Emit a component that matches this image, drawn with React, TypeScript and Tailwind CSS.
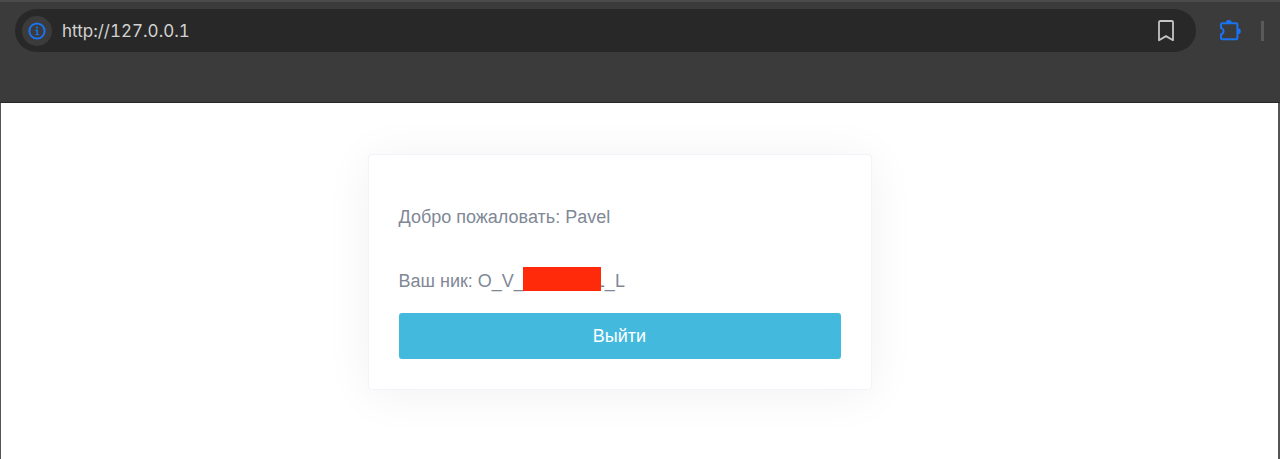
function InfoIcon() {
  return (
    <svg viewBox="0 0 18 18" className="size-[18px]" fill="none" aria-hidden="true">
      <circle cx="9" cy="9" r="7.6" stroke="#1a73f0" strokeWidth="2" />
      <path d="M7.4 8.300h1.800v4.600" stroke="#1a73f0" strokeWidth="1.500" />
      <path d="M7.300 12.600h3.800" stroke="#1a73f0" strokeWidth="1" />
      <circle cx="9" cy="5.500" r="1.100" fill="#1a73f0" />
    </svg>
  );
}

function BookmarkIcon() {
  return (
    <svg viewBox="0 0 18 22" className="h-[22px] w-[18px]" fill="none" aria-hidden="true">
      <path
        d="M3.2 1h11.6a1.2 1.2 0 0 1 1.2 1.2v18l-7-4.1-7 4.1v-18A1.2 1.2 0 0 1 3.2 1z"
        stroke="#c4c4c4"
        strokeWidth="1.8"
        strokeLinejoin="round"
      />
    </svg>
  );
}

function PuzzleIcon() {
  return (
    <svg viewBox="0 0 22 22" className="size-[22px]" fill="none" aria-hidden="true">
      <path
        d="M3.2 3.200h14a1.200 1.200 0 0 1 1.200 1.200v13.600a1.200 1.200 0 0 1-1.200 1.200h-14A1.200 1.200 0 0 1 2 18v-3.500c3.400-1.500 3.400-5.100 0-6.600V4.400a1.200 1.200 0 0 1 1.200-1.200z"
        stroke="#1a73f0"
        strokeWidth="2"
        strokeLinejoin="round"
      />
      <path
        d="M6.800 3a3 3 0 0 1 6 0zM18.800 8.200a3 3 0 0 1 0 6z"
        fill="#1a73f0"
      />
    </svg>
  );
}

function BrowserBar() {
  return (
    <header className="h-[103px] border-t-2 border-b border-t-[#4a4a4a] border-b-[#2a2727] bg-[#3b3b3b] pt-[7px] pr-4 pl-[15px]">
      <div className="flex items-center">
        <div className="flex h-[43px] flex-1 items-center rounded-full bg-[#282828] pr-[21px] pl-[7px]">
          <button
            type="button"
            aria-label="Site information"
            className="flex size-[30px] shrink-0 items-center justify-center rounded-full bg-[#3b3b3b]"
          >
            <InfoIcon />
          </button>
          <input
            type="text"
            aria-label="Address"
            defaultValue="http://127.0.0.1"
            className="ml-[10px] min-w-0 flex-1 bg-transparent font-['Inter',sans-serif] text-[17px] leading-6 text-[#d2d2d2] tabular-nums outline-none"
          />
          <button type="button" aria-label="Bookmark this page">
            <BookmarkIcon />
          </button>
        </div>
        <button type="button" aria-label="Extensions" className="ml-[23px]">
          <PuzzleIcon />
        </button>
        <span className="ml-[20px] h-5 w-[3px] bg-[#5a5a5a]" />
      </div>
    </header>
  );
}

function ProfileCard() {
  return (
    <section className="w-full max-w-[504px] rounded border border-[#f0f3f8] bg-white px-[30px] pt-12 pb-[30px] text-[18px] leading-7 text-[#7f8896] shadow-[0_4px_48px_rgba(0,0,0,0.06)]">
      <p>Добро пожаловать: Pavel</p>
      <p className="mt-9 flex items-center">
        <span>Ваш ник: O_V_</span>
        <span className="relative -mt-1 -ml-px h-6 w-[78px] bg-[#ff2a0a]" />
        <span className="-ml-1.5">L_L</span>
      </p>
      <button
        type="button"
        className="mt-[18px] h-[46px] w-full rounded-[3px] bg-[#43b9dd] text-[18px] text-white"
      >
        Выйти
      </button>
    </section>
  );
}

export default function App() {
  return (
    <div className="flex min-h-screen flex-col bg-white font-['Liberation_Sans',Arial,sans-serif]">
      <BrowserBar />
      <main className="flex flex-1 items-start justify-center border-r-2 border-l border-r-[#555555] border-l-[#555555] pt-[51px] pr-10 pb-10">
        <ProfileCard />
      </main>
    </div>
  );
}
